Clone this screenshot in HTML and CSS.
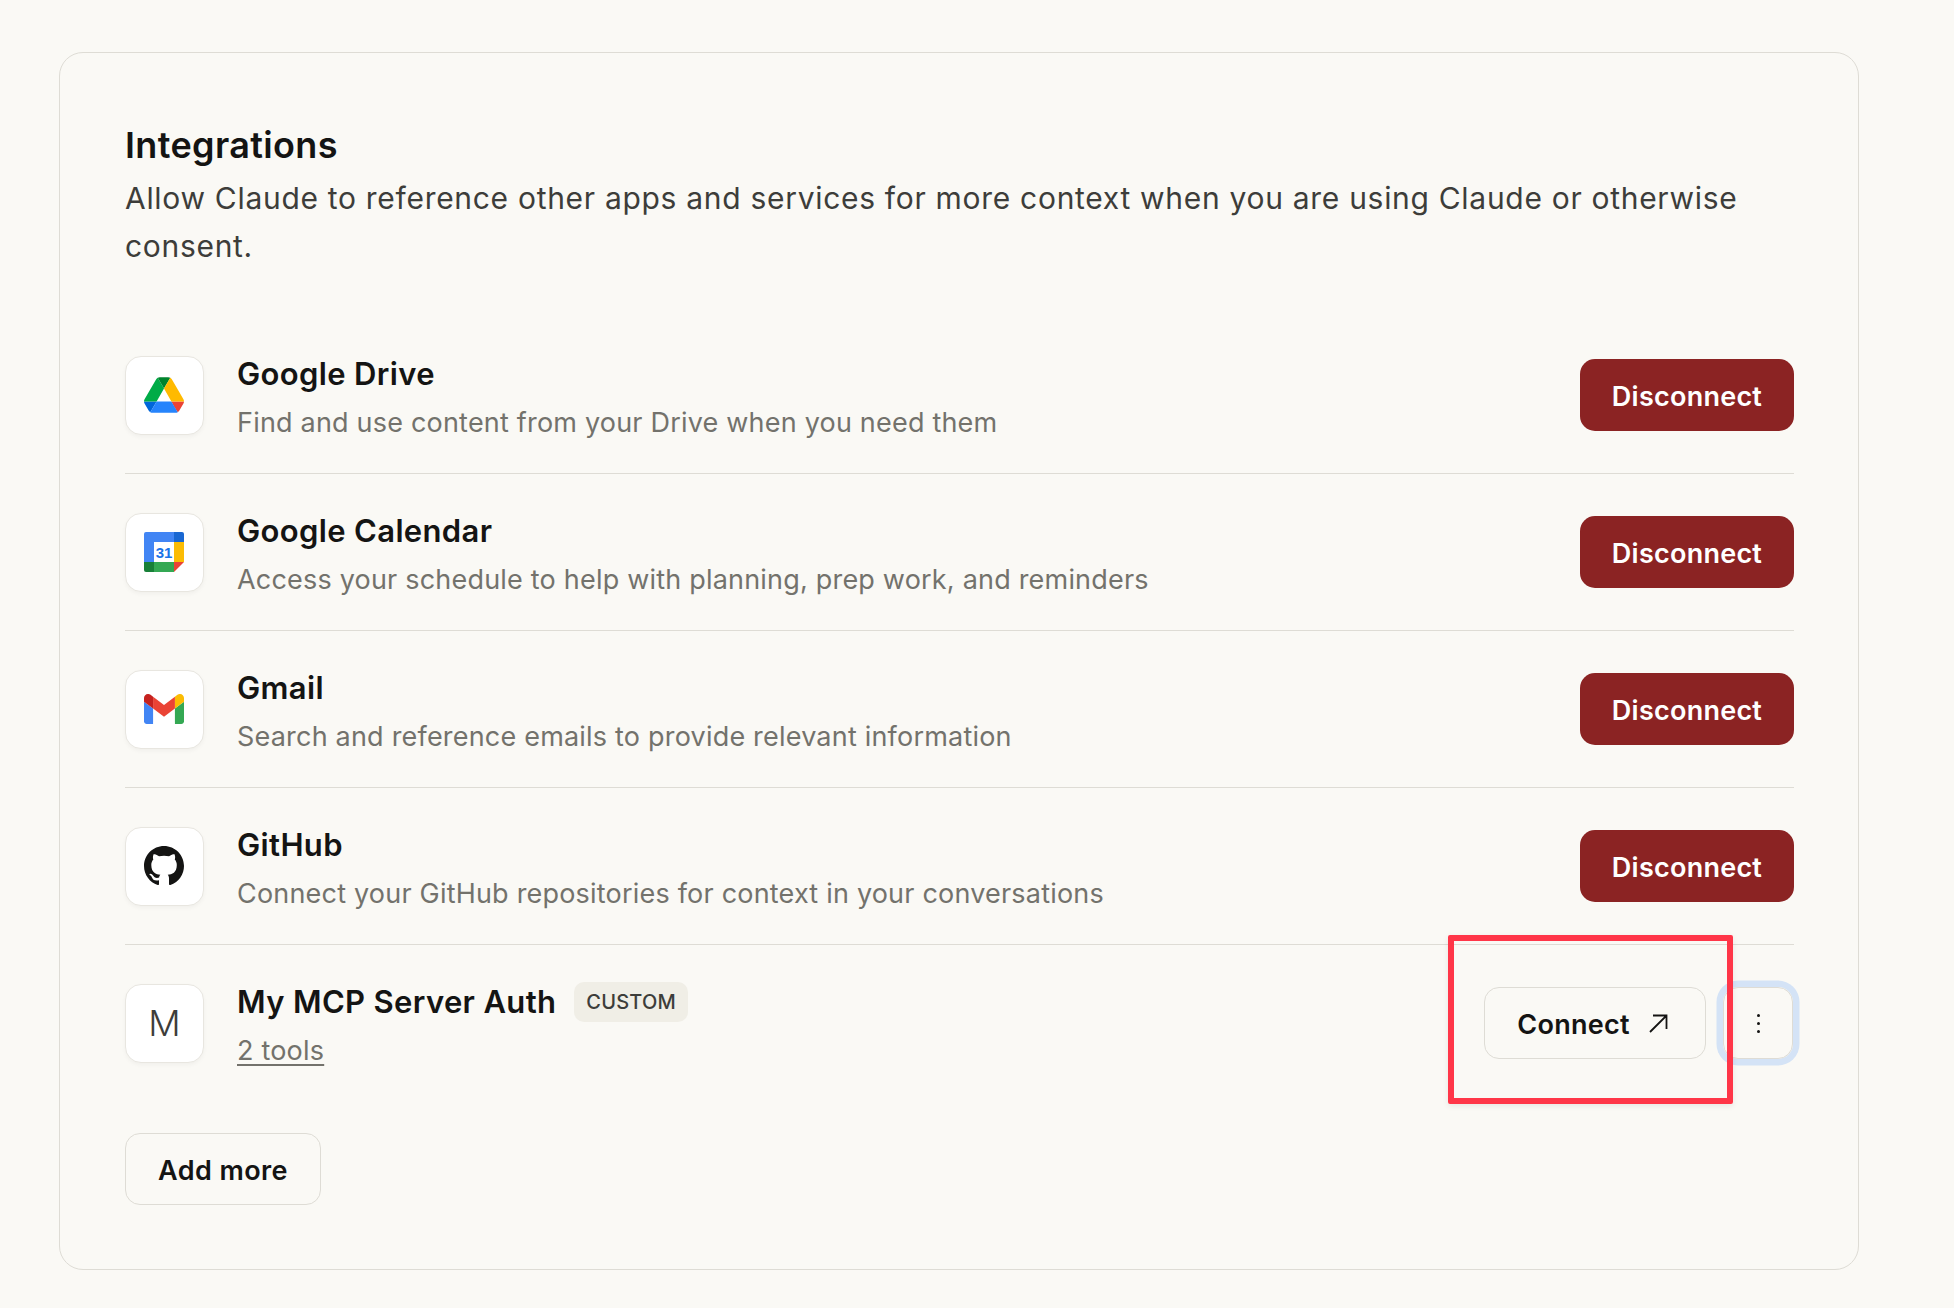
FILE: index.html
```html
<!DOCTYPE html>
<html lang="en">
<head>
<meta charset="utf-8">
<title>Integrations</title>
<link rel="stylesheet" href="styles.css">
</head>
<body>
<section class="card">
  <h1 class="heading">Integrations</h1>
  <p class="intro">Allow Claude to reference other apps and services for more context when you are using Claude or otherwise consent.</p>
  <ul class="list">
    <li class="row">
      <div class="tile">
        <svg class="drive" viewBox="0 0 87.3 78"><path d="m6.6 66.85 3.85 6.65c.8 1.4 1.95 2.5 3.3 3.3l13.75-23.8h-27.5c0 1.55.4 3.1 1.2 4.5z" fill="#0066da"/><path d="m43.65 25-13.75-23.8c-1.35.8-2.5 1.9-3.3 3.3l-25.4 44a9.06 9.06 0 0 0 -1.2 4.5h27.5z" fill="#00ac47"/><path d="m73.55 76.8c1.35-.8 2.5-1.9 3.3-3.3l1.6-2.75 7.65-13.25c.8-1.4 1.2-2.95 1.2-4.5h-27.502l5.852 11.5z" fill="#ea4335"/><path d="m43.65 25 13.75-23.8c-1.35-.8-2.9-1.2-4.5-1.2h-18.5c-1.6 0-3.15.45-4.5 1.2z" fill="#00832d"/><path d="m59.8 53h-32.3l-13.75 23.8c1.35.8 2.9 1.2 4.5 1.2h50.8c1.6 0 3.15-.45 4.5-1.2z" fill="#2684fc"/><path d="m73.4 26.5-12.7-22c-.8-1.4-1.95-2.5-3.3-3.3l-13.75 23.8 16.15 28h27.45c0-1.55-.4-3.1-1.2-4.5z" fill="#ffba00"/></svg>
      </div>
      <div class="info">
        <div class="name-line"><span class="name">Google Drive</span></div>
        <p class="sub">Find and use content from your Drive when you need them</p>
      </div>
      <button class="btn danger">Disconnect</button>
    </li>
    <li class="row">
      <div class="tile">
        <svg class="cal" viewBox="0 0 40 40"><path d="M2 0h28v10H10v20H0V2a2 2 0 0 1 2-2z" fill="#4285f4"/><path d="M30 0h8a2 2 0 0 1 2 2v8H30z" fill="#1967d2"/><rect x="30" y="10" width="10" height="20" fill="#fbbc04"/><path d="M30 30h10L30 40z" fill="#ea4335"/><rect x="10" y="30" width="20" height="10" fill="#34a853"/><path d="M0 30h10v10H2a2 2 0 0 1-2-2z" fill="#188038"/><text class="cal-num" x="20" y="26" text-anchor="middle">31</text></svg>
      </div>
      <div class="info">
        <div class="name-line"><span class="name">Google Calendar</span></div>
        <p class="sub">Access your schedule to help with planning, prep work, and reminders</p>
      </div>
      <button class="btn danger">Disconnect</button>
    </li>
    <li class="row">
      <div class="tile">
        <svg class="gmail" viewBox="52 42 88 66"><path fill="#4285f4" d="M58 108h14V74L52 59v43c0 3.32 2.69 6 6 6"/><path fill="#34a853" d="M120 108h14c3.32 0 6-2.69 6-6V59l-20 15"/><path fill="#fbbc04" d="M120 48v26l20-15v-8c0-7.42-8.47-11.65-14.4-7.2"/><path fill="#ea4335" d="M72 74V48l24 18 24-18v26L96 92"/><path fill="#c5221f" d="M52 51v8l20 15V48l-5.6-4.2c-5.94-4.45-14.4-.22-14.4 7.2"/></svg>
      </div>
      <div class="info">
        <div class="name-line"><span class="name">Gmail</span></div>
        <p class="sub">Search and reference emails to provide relevant information</p>
      </div>
      <button class="btn danger">Disconnect</button>
    </li>
    <li class="row">
      <div class="tile">
        <svg class="github" viewBox="0 0 16 16"><path fill="#141413" d="M8 0C3.58 0 0 3.58 0 8c0 3.54 2.29 6.53 5.47 7.59.4.07.55-.17.55-.38 0-.19-.01-.82-.01-1.49-2.01.37-2.53-.49-2.69-.94-.09-.23-.48-.94-.82-1.13-.28-.15-.68-.52-.01-.53.63-.01 1.08.58 1.23.82.72 1.21 1.87.87 2.33.66.07-.52.28-.87.51-1.07-1.78-.2-3.64-.89-3.64-3.95 0-.87.31-1.59.82-2.15-.08-.2-.36-1.02.08-2.12 0 0 .67-.21 2.2.82.64-.18 1.32-.27 2-.27.68 0 1.36.09 2 .27 1.53-1.04 2.2-.82 2.2-.82.44 1.1.16 1.92.08 2.12.51.56.82 1.27.82 2.15 0 3.07-1.87 3.75-3.65 3.95.29.25.54.73.54 1.48 0 1.07-.01 1.93-.01 2.2 0 .21.15.46.55.38A8.013 8.013 0 0016 8c0-4.42-3.58-8-8-8z"/></svg>
      </div>
      <div class="info">
        <div class="name-line"><span class="name">GitHub</span></div>
        <p class="sub">Connect your GitHub repositories for context in your conversations</p>
      </div>
      <button class="btn danger">Disconnect</button>
    </li>
    <li class="row last">
      <div class="tile letter">M</div>
      <div class="info">
        <div class="name-line"><span class="name">My MCP Server Auth</span><span class="badge">CUSTOM</span></div>
        <p class="sub"><a class="tools" href="#">2 tools</a></p>
      </div>
      <div class="actions">
        <button class="btn outline connect">Connect
          <svg class="arrow" viewBox="0 0 20 20"><path d="M2 18 18.500 1.500M5 1.500h13.500V15" fill="none" stroke="#141413" stroke-width="1.800"/></svg>
        </button>
        <button class="more" aria-label="More"><span class="dot"></span><span class="dot"></span><span class="dot"></span></button>
      </div>
      <div class="highlight"></div>
    </li>
  </ul>
  <button class="btn outline add">Add more</button>
</section>
</body>
</html>
```

FILE: styles.css
```css
* { box-sizing: border-box; }
html, body { margin: 0; padding: 0; }
body {
  background: #faf9f5;
  font-family: Inter, "Liberation Sans", sans-serif;
  color: #141413;
  height: 1308px;
  overflow: hidden;
  padding: 52px 95px 0 59px;
}
.card {
  border: 1px solid #dedcd5;
  border-radius: 24px;
  padding: 64px 64px 64px 65px;
}
.heading {
  margin: 0;
  font-size: 36px;
  line-height: 57px;
  font-weight: 600;
  letter-spacing: 0.35px;
}
.intro {
  margin: 0;
  font-size: 30px;
  line-height: 48px;
  color: #3d3d3a;
  letter-spacing: 0.7px;
  font-weight: 400;
}
.list { list-style: none; margin: 47px 0 0; padding: 0; }
.row {
  position: relative;
  height: 157px;
  display: flex;
  align-items: center;
  border-bottom: 1px solid #dedcd5;
}
.row.last { border-bottom: 0; height: 156px; }
.tile {
  flex: none;
  width: 79px;
  height: 79px;
  background: #fff;
  border: 1px solid #e8e6e0;
  border-radius: 16px;
  box-shadow: 0 2px 4px rgba(0,0,0,.04);
  display: flex;
  align-items: center;
  justify-content: center;
}
.letter { font-size: 36px; color: #3d3d3a; font-weight: 300; }
.drive { width: 40px; height: 36px; display: block; margin-left: -1px; }
.cal { width: 40px; height: 40px; display: block; margin-left: -1px; }
.cal-num { font: 700 15px "Liberation Sans", sans-serif; fill: #1a73e8; }
.gmail { width: 40px; height: 30px; display: block; margin-left: -1px; }
.github { width: 40px; height: 40px; display: block; margin-left: -1px; }
.info {
  flex: 1;
  align-self: flex-start;
  padding: 38px 0 0 33px;
}
.name-line { display: flex; align-items: center; height: 38px; }
.name { font-size: 31px; line-height: 38px; font-weight: 600; letter-spacing: 0.35px; }
.badge {
  margin-left: 18px;
  height: 40px;
  padding: 0 12px;
  display: flex;
  align-items: center;
  border-radius: 10px;
  background: #f0eee6;
  color: #3d3d3a;
  font-size: 20px;
  font-weight: 500;
  letter-spacing: 0.2px;
}
.sub {
  margin: 11px 0 0;
  font-size: 27px;
  line-height: 38px;
  color: #73726c;
  letter-spacing: 0.2px;
}
.tools { color: #73726c; text-decoration: underline; text-underline-offset: 4px; }
.btn {
  height: 72px;
  border-radius: 15px;
  font-family: inherit;
  font-size: 27px;
  font-weight: 600;
  letter-spacing: 0.25px;
  display: inline-flex;
  align-items: center;
  justify-content: center;
  padding: 2px 0 0;
}
.danger {
  width: 214px;
  flex: none;
  border: 0;
  background: #8b2323;
  color: #fff;
}
.outline {
  border: 1px solid #dedcd5;
  background: transparent;
  color: #141413;
}
.connect { width: 222px; gap: 18px; padding-right: 5px; }
.arrow { width: 20px; height: 20px; display: block; }
.actions { display: flex; align-items: center; gap: 17px; margin-right: 1px; }
.more {
  width: 70px;
  height: 72px;
  padding: 0;
  border: 1px solid #dedcd5;
  border-radius: 15px;
  background: transparent;
  box-shadow: 0 0 0 6.5px #d4e3f6;
  display: flex;
  flex-direction: column;
  align-items: center;
  justify-content: center;
  gap: 5px;
}
.dot { width: 3px; height: 3px; border-radius: 50%; background: #141413; }
.highlight {
  position: absolute;
  left: 1323px;
  top: -10px;
  width: 285px;
  height: 169px;
  border: 6px solid #ff3648;
  border-radius: 2px;
  box-shadow: 0 2px 6px rgba(0,0,0,.08);
  pointer-events: none;
}
.add { width: 196px; margin-top: 32px; letter-spacing: 0.4px; }
```
